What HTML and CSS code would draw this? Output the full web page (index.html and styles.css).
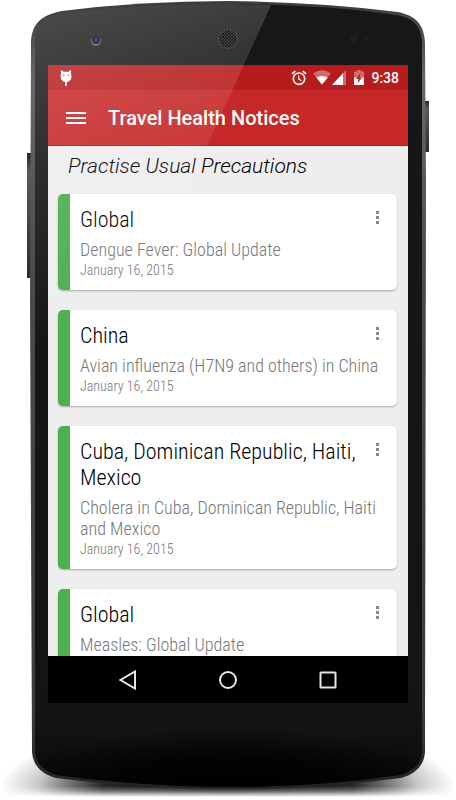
FILE: index.html
```html
<!DOCTYPE html>
<html lang="en">
<head>
<meta charset="utf-8">
<meta name="viewport" content="width=device-width, initial-scale=1">
<title>Travel Health Notices</title>
<link rel="stylesheet" href="styles.css">
</head>
<body>
<div class="device">
  <svg class="device-body" viewBox="0 0 456 800" preserveAspectRatio="none" aria-hidden="true">
    <defs>
      <linearGradient id="rim" x1="0" y1="0" x2="0" y2="1">
        <stop offset="0" stop-color="#3b3c3e"/><stop offset=".1" stop-color="#67686c"/>
        <stop offset=".35" stop-color="#4b4b4e"/><stop offset=".9" stop-color="#3c3c3e"/><stop offset="1" stop-color="#222"/>
      </linearGradient>
      <linearGradient id="face" x1="0" y1="0" x2="0" y2="1">
        <stop offset="0" stop-color="#171717"/><stop offset=".92" stop-color="#141414"/><stop offset="1" stop-color="#080808"/>
      </linearGradient>
      <linearGradient id="key" x1="0" y1="0" x2="0" y2="1">
        <stop offset="0" stop-color="#222"/><stop offset=".15" stop-color="#5a5a5c"/><stop offset="1" stop-color="#2c2c2d"/>
      </linearGradient>
      <radialGradient id="chin" cx=".5" cy="1" r=".6" gradientTransform="translate(0 -.2) scale(1 1.200)">
        <stop offset="0" stop-color="#000"/><stop offset=".5" stop-color="#000" stop-opacity=".75"/><stop offset="1" stop-color="#000" stop-opacity="0"/>
      </radialGradient>
      <pattern id="mesh" width="3" height="3" patternUnits="userSpaceOnUse">
        <circle cx="1" cy="1" r="1" fill="#101010"/><circle cx="2.500" cy="2.500" r=".8" fill="#141414"/>
      </pattern>
      <radialGradient id="ground">
        <stop offset="0" stop-color="#000"/><stop offset=".55" stop-color="#000" stop-opacity=".85"/>
        <stop offset=".72" stop-color="#000" stop-opacity=".5"/><stop offset=".84" stop-color="#000" stop-opacity=".2"/>
        <stop offset="1" stop-color="#000" stop-opacity="0"/>
      </radialGradient>
      <linearGradient id="fade" gradientUnits="userSpaceOnUse" x1="0" y1="786" x2="0" y2="797">
        <stop offset="0" stop-color="#fff"/><stop offset=".45" stop-color="#aaa"/><stop offset="1" stop-color="#000"/>
      </linearGradient>
      <mask id="floor" maskUnits="userSpaceOnUse" x="0" y="700" width="456" height="100"><rect y="700" width="456" height="100" fill="url(#fade)"/></mask>
    </defs>
    <g mask="url(#floor)"><ellipse cx="228" cy="788" rx="228" ry="66" fill="url(#ground)"/></g>
    <rect x="27" y="153" width="5" height="125" fill="url(#key)"/>
    <rect x="425" y="101" width="4" height="51" fill="url(#key)"/>
    <path d="M31 41C32 23 42 15 62 11Q140 1 228 1Q320 2 398 12C416 16 424 24 425 43L426 180L425 752C424 766 415 774 401 778Q320 789 228 789Q135 788 56 778C41 774 33 765 32 752L30 300Z" fill="url(#rim)"/>
    <path d="M35 42C35 24 43 16 63 13Q140 4 228 4Q320 4 396 15C413 18 421 25 422 43L422 752C421 764 413 771 400 775Q320 787 228 787Q135 786 57 775C43 771 36 763 35 752Z" fill="url(#face)"/>
    <path d="M36 706H421V752C420 764 413 771 400 775Q320 787 228 787Q135 786 57 775C43 771 36 763 36 752Z" fill="url(#chin)"/>
    <circle cx="354" cy="39" r="4" fill="#221c1d"/><circle cx="366" cy="39" r="2" fill="#221c1d"/>
  </svg>

  <div class="screen">
    <header class="app-header">
      <div class="status-bar">
        <svg class="status-bug" viewBox="0 0 14 18" aria-hidden="true">
          <path d="M7 12v5" stroke="#fff" stroke-width="1.600"/>
          <path d="M1.800 1.500h1.500l1.200 1.300h5l1.200-1.300h1.500l-.4 3Q12.500 5.600 12.500 7.500A5.500 5.500 0 0 1 1.500 7.500Q1.500 5.600 2.200 4.500Z" fill="#fff"/>
          <circle cx="4.800" cy="6.300" r=".7" fill="#b92a2a"/><circle cx="9.200" cy="6.300" r=".7" fill="#b92a2a"/>
        </svg>
        <div class="status-icons">
          <svg class="icon-alarm" viewBox="0 0 16 16" aria-hidden="true">
            <g fill="none" stroke="#fff" stroke-width="1.600"><circle cx="8" cy="8.700" r="5.700"/><path d="M1 3.800 4.300 1M15 3.800 11.700 1"/><path d="M7.700 5.400V9l2.800 1.800" stroke-width="1.300"/></g>
          </svg>
          <svg class="icon-wifi" viewBox="0 0 18 15" aria-hidden="true">
            <path d="M0 3.500Q9-2.800 18 3.500L9 14.500Z" fill="#fff" opacity=".35"/>
            <path d="M3.300 7.500Q9 4.500 14.700 7.500L9 14.500Z" fill="#fff"/>
          </svg>
          <svg class="icon-signal" viewBox="0 0 14 15" aria-hidden="true">
            <path d="M14 0V15H0Z" fill="#fff" opacity=".35"/><path d="M11 3.200V15H0Z" fill="#fff"/>
          </svg>
          <svg class="icon-battery" viewBox="0 0 10 15" aria-hidden="true">
            <path d="M0 1.500h3V0h4v1.500h3V8H0Z" fill="#fff" opacity=".35"/><path d="M0 7.500h10V15H0Z" fill="#fff"/>
            <path d="M6.500 3 2 9h2.600L3.600 13.500 8 7.500H5.600Z" fill="#b71c1c"/>
          </svg>
          <time class="clock">9:38</time>
        </div>
      </div>
      <div class="toolbar">
        <button class="menu-button" type="button" aria-label="Open navigation">
          <svg viewBox="0 0 20 14" aria-hidden="true"><path d="M0 2h20M0 7h20M0 12h20" stroke="#fff" stroke-width="2"/></svg>
        </button>
        <h1>Travel Health Notices</h1>
      </div>
    </header>

    <main class="notices">
      <h2>Practise Usual Precautions</h2>
      <article class="card">
        <div class="card-text"><h3>Global</h3><p>Dengue Fever: Global Update</p><time>January 16, 2015</time></div>
        <button class="more" type="button" aria-label="More options"><i></i><i></i><i></i></button>
      </article>
      <article class="card">
        <div class="card-text"><h3>China</h3><p>Avian influenza (H7N9 and others) in China</p><time>January 16, 2015</time></div>
        <button class="more" type="button" aria-label="More options"><i></i><i></i><i></i></button>
      </article>
      <article class="card">
        <div class="card-text"><h3>Cuba, Dominican Republic, Haiti, Mexico</h3><p>Cholera in Cuba, Dominican Republic, Haiti and Mexico</p><time>January 16, 2015</time></div>
        <button class="more" type="button" aria-label="More options"><i></i><i></i><i></i></button>
      </article>
      <article class="card">
        <div class="card-text"><h3>Global</h3><p>Measles: Global Update</p></div>
        <button class="more" type="button" aria-label="More options"><i></i><i></i><i></i></button>
      </article>
    </main>

    <nav class="system-nav">
      <button type="button" aria-label="Back"><svg viewBox="0 0 20 20"><path d="M17 1.500V18.500L2.500 10Z"/></svg></button>
      <button type="button" aria-label="Home"><svg viewBox="0 0 20 20"><circle cx="10" cy="10" r="8"/></svg></button>
      <button type="button" aria-label="Recent apps"><svg viewBox="0 0 20 20"><rect x="2.500" y="2.500" width="15" height="15" rx=".5"/></svg></button>
    </nav>
  </div>

  <svg class="glare" viewBox="0 0 456 800" preserveAspectRatio="none" aria-hidden="true">
    <defs><linearGradient id="shine" gradientUnits="userSpaceOnUse" x1="110" y1="0" x2="210" y2="290">
      <stop offset="0" stop-color="#fff" stop-opacity=".21"/><stop offset=".35" stop-color="#fff" stop-opacity=".12"/><stop offset="1" stop-color="#fff" stop-opacity="0"/>
    </linearGradient></defs>
    <path d="M35 42C35 24 43 16 63 13Q140 4 228 4L271 5L110 360H35Z" fill="url(#shine)"/>
    <circle cx="96" cy="41" r="5" fill="#777"/><circle cx="96" cy="40" r="4" fill="#34343c"/><circle cx="96" cy="40" r="2" fill="#4545a0"/>
    <circle cx="228" cy="39" r="10" fill="#4c4c4c"/><circle cx="228" cy="39" r="9" fill="url(#mesh)"/>
  </svg>
</div>
</body>
</html>
```
FILE: styles.css
```css
* { box-sizing: border-box; }

body {
  margin: 0;
  background: #fff;
  font-family: Roboto, "Liberation Sans", sans-serif;
}

h1, h2, h3, p { margin: 0; }

button {
  padding: 0;
  border: 0;
  background: none;
  cursor: pointer;
}

svg { display: block; }

.device {
  position: relative;
  height: 100vh;
  padding: 65px 48px 97px;
}

.device-body,
.glare {
  position: absolute;
  inset: 0;
  width: 100%;
  height: 100%;
}

.glare { pointer-events: none; }

.screen {
  position: relative;
  display: flex;
  flex-direction: column;
  height: 100%;
  background: #eee;
}

.app-header {
  background: #c62828;
  color: #fff;
  border-bottom: 1px solid #c11414;
}

.status-bar {
  display: flex;
  align-items: center;
  justify-content: space-between;
  height: 25px;
  padding: 0 9px 0 11px;
  background: #b71c1c;
}

.status-icons {
  display: flex;
  align-items: center;
}

.status-bug { width: 14px; height: 18px; }
.icon-alarm { width: 16px; height: 16px; margin-right: 6px; }
.icon-wifi { width: 18px; height: 15px; margin-right: 1px; }
.icon-signal { width: 14px; height: 15px; margin-right: 8px; }
.icon-battery { width: 10px; height: 15px; margin-right: 7px; }

.clock {
  font-size: 14px;
  font-weight: 500;
  line-height: 26px;
}

.toolbar {
  display: flex;
  align-items: center;
  gap: 22px;
  height: 55px;
  padding: 0 18px;
}

.menu-button svg { width: 20px; height: 14px; }

.toolbar h1 {
  font-size: 20px;
  font-weight: 500;
  line-height: 24px;
}

.notices {
  flex: 1;
  min-height: 0;
  overflow-y: auto;
  scrollbar-width: none;
  padding: 0 11px 0 10px;
}

.notices h2 {
  padding: 6px 10px 14px;
  font-size: 21px;
  font-style: italic;
  font-weight: 300;
  line-height: 28px;
}

.card {
  display: flex;
  justify-content: space-between;
  margin-bottom: 20px;
  padding: 13px 12px 12px 10px;
  border-left: 12px solid #4caf50;
  border-radius: 5px;
  background: #fff;
  box-shadow: 0 1px 2px rgb(0 0 0 / 30%);
  font-family: "Roboto Condensed", Roboto, sans-serif;
  font-weight: 300;
}

.card-text { flex: 1; }

.card h3 {
  padding-right: 16px;
  font-size: 22px;
  font-weight: 300;
  line-height: 26px;
}

.card p {
  margin: 6px 0 2px;
  color: #767676;
  font-size: 18px;
  line-height: 21px;
}

.card time {
  display: block;
  color: #767676;
  font-size: 14px;
  line-height: 16px;
}

.more {
  display: flex;
  flex-direction: column;
  align-items: center;
  gap: 2px;
  width: 16px;
  height: 24px;
  margin-left: -16px;
  padding-top: 4px;
}

.more i {
  width: 3px;
  height: 3px;
  background: #888;
}

.system-nav {
  display: flex;
  justify-content: center;
  gap: 80px;
  height: 47px;
  background: #000;
}

.system-nav svg {
  width: 20px;
  height: 20px;
  fill: none;
  stroke: #e6e6e6;
  stroke-width: 2;
}
```
